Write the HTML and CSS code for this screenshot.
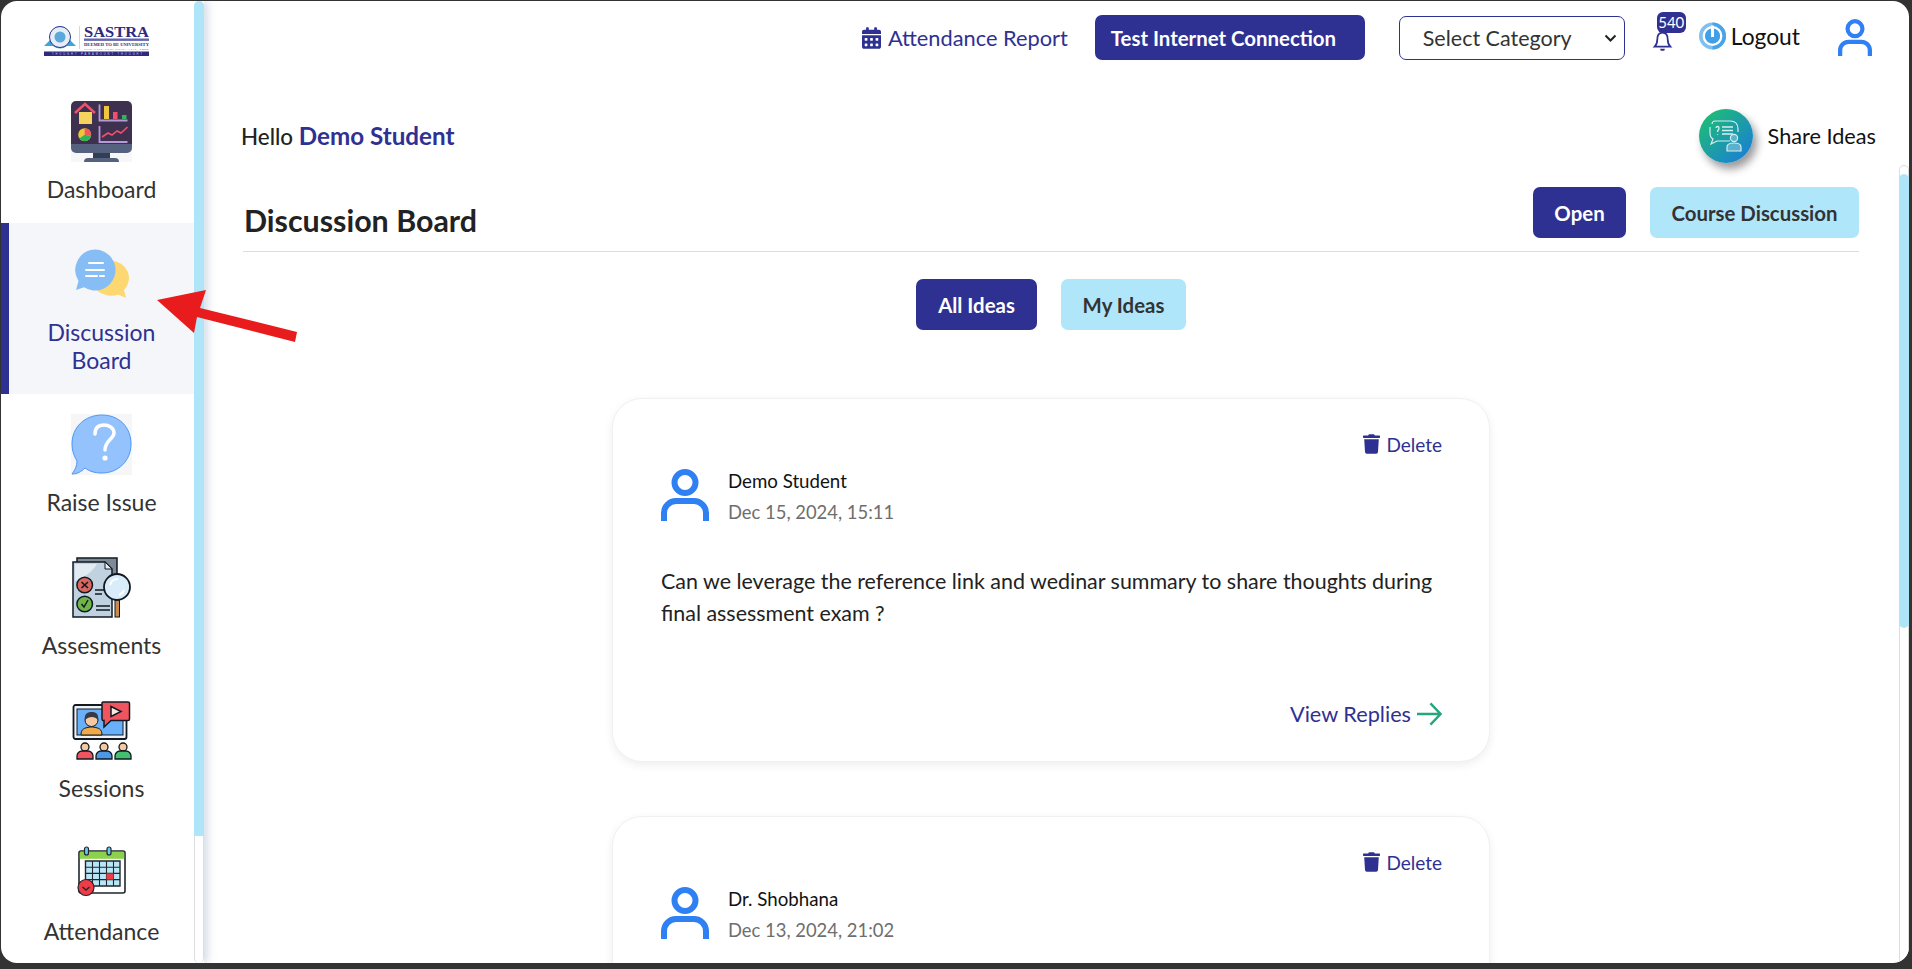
FILE: index.html
```html
<!DOCTYPE html>
<html lang="en">
<head>
<meta charset="utf-8">
<title>Discussion Board</title>
<link rel="stylesheet" href="styles.css">
</head>
<body>
<div class="window">
  <aside class="sidebar">
    <nav class="side-nav">
      <div class="logo">
        <svg class="logo-svg" viewBox="0 0 105 32" width="105" height="32">
          <path d="M0 21 L6 15 L10 4 Q16 -2 22 4 L26 15 L32 21 L23 21 Q16 26 9 21Z" fill="#3aa6dd"/>
          <circle cx="16" cy="12" r="10.500" fill="#e6eef5" stroke="#2e3192" stroke-width="1"/>
          <circle cx="16" cy="12" r="5.500" fill="#5aa8dc"/>
          <rect x="35" y="1" width="0.6" height="23" fill="#bbb"/>
          <text class="logo-name" x="40" y="12" textLength="65" lengthAdjust="spacingAndGlyphs">SASTRA</text>
          <rect x="40" y="13.5" width="65" height="2.4" fill="#2e3192" opacity=".75"/>
          <text class="logo-sub" x="40" y="20.5" textLength="65" lengthAdjust="spacingAndGlyphs">DEEMED TO BE UNIVERSITY</text>
          <text class="logo-sub2" x="40" y="24.5" textLength="65" lengthAdjust="spacingAndGlyphs">U/S 3 OF THE UGC ACT, 1956</text>
          <rect x="0" y="26.5" width="105" height="4.5" fill="#2e2a80"/>
          <text class="logo-tag" x="8" y="30" textLength="90" lengthAdjust="spacing">THOUGHT PARAMOUNT THOUGHT</text>
        </svg>
      </div>

      <a class="nav-item nav-first">
        <svg class="nav-icon" viewBox="0 0 61 61">
          <rect width="61" height="61" fill="#f7f7f7"/>
          <path d="M5 0H56a5 5 0 0 1 5 5V47H0V5a5 5 0 0 1 5-5Z" fill="#3e3150"/>
          <path d="M0 43H61V47a5 5 0 0 1-5 5H5a5 5 0 0 1-5-5Z" fill="#56607f"/>
          <rect x="22" y="52" width="17" height="5" fill="#2f3f55"/>
          <path d="M13 61a4 4 0 0 1 4-4H44a4 4 0 0 1 4 4Z" fill="#56607f"/>
          <path d="M8 11H21V23H8Z" fill="#f5d35c"/>
          <path d="M4 12L14 3L24 12" fill="none" stroke="#f0506a" stroke-width="2.6"/>
          <path d="M28.5 3.5V19.5H56.5" fill="none" stroke="#b29bd6" stroke-width="1.8"/>
          <rect x="33" y="5" width="5" height="13" fill="#f0c43c"/>
          <rect x="42" y="11" width="4.5" height="7" fill="#f0506a"/>
          <rect x="51" y="14" width="4.5" height="4" fill="#2fb559"/>
          <circle cx="13.7" cy="33.7" r="6.5" fill="#f0c43c"/>
          <path d="M13.7 33.7V27.2A6.5 6.5 0 0 1 20 35Z" fill="#ee5b5b"/>
          <path d="M13.7 33.7L20 35A6.5 6.5 0 0 1 8.5 37.5Z" fill="#2fb559"/>
          <path d="M28.5 25V41H56.5" fill="none" stroke="#b29bd6" stroke-width="1.8"/>
          <path d="M31 36L37 32L41 34L46 30L50 32L56.5 26" fill="none" stroke="#f0506a" stroke-width="1.6"/>
        </svg>
        <span class="nav-label">Dashboard</span>
      </a>

      <a class="nav-item nav-active">
        <svg class="nav-icon" viewBox="0 0 61 61">
          <path d="M41 18a17 17 0 1 0-7 33.5 a17 17 0 0 0 13 0L55 55L53 47A17 17 0 0 0 41 18Z" fill="#fdd772"/>
          <path d="M24 6.5a20.5 20.5 0 1 1-11 37.8L5 47L7.500 38A20.500 20.500 0 0 1 24 6.500Z" fill="#85bdf4"/>
          <path d="M18 20H32M15 27H33M15 33H26M29 33H33" stroke="#fff" stroke-width="2" stroke-linecap="round"/>
        </svg>
        <span class="nav-label">Discussion<br>Board</span>
      </a>

      <a class="nav-item">
        <svg class="nav-icon" viewBox="0 0 61 61">
          <rect width="61" height="61" fill="#f6f6f6"/>
          <path d="M31 1C48 1 60 13 60 30C60 47 47 59 31 59C23 59 18 57 14 54C10 58 6 60 1 60C4 56 6 52 6 47C3 42 1 37 1 30C1 13 14 1 31 1Z" fill="#94c2fd" stroke="#4d97fb" stroke-width="1"/>
          <path d="M24 20C24 13 28 11 33 11C38 11 43 14 43 19C43 25 34 26 34 36" fill="none" stroke="#fff" stroke-width="3.500" stroke-linecap="round"/>
          <circle cx="34" cy="44" r="2.600" fill="#fff"/>
        </svg>
        <span class="nav-label">Raise Issue</span>
      </a>

      <a class="nav-item">
        <svg class="nav-icon" viewBox="0 0 61 61">
          <path d="M6 4V1H46V40H6Z" fill="#7f8a96" stroke="#111a22" stroke-width="1.500"/>
          <path d="M2 5H34L41 12V60H2Z" fill="#c0d2e0" stroke="#111a22" stroke-width="1.500"/>
          <path d="M34 5V12H41Z" fill="#e6edf3" stroke="#111a22" stroke-width="1"/>
          <path d="M4 7H26C22 14 14 20 4 24Z" fill="#e2ebf2"/>
          <circle cx="13.700" cy="28" r="7.800" fill="#d9675d" stroke="#111a22" stroke-width="1.500"/>
          <path d="M10.500 25L17 31M17 25L10.500 31" stroke="#111a22" stroke-width="1.700"/>
          <circle cx="13.700" cy="47" r="7.800" fill="#6fb548" stroke="#111a22" stroke-width="1.500"/>
          <path d="M10.500 47L13 50L17 43" fill="none" stroke="#111a22" stroke-width="1.500"/>
          <path d="M24 33H33M24 37H31M25 49H39M25 53H39" stroke="#111a22" stroke-width="1.300"/>
          <rect x="44" y="43" width="4.500" height="17" fill="#c98a4b" stroke="#111a22" stroke-width="1"/>
          <circle cx="46" cy="30" r="13" fill="#d9ecfa" stroke="#111a22" stroke-width="1.800"/>
          <path d="M39 28A8 8 0 0 1 47 22M53 33A8 8 0 0 1 48 38" fill="none" stroke="#fff" stroke-width="2"/>
        </svg>
        <span class="nav-label">Assesments</span>
      </a>

      <a class="nav-item">
        <svg class="nav-icon" viewBox="0 0 61 61">
          <rect x="2.500" y="5" width="53" height="34" rx="2" fill="#eef2f6" stroke="#111a22" stroke-width="1.800"/>
          <rect x="6" y="9" width="46" height="26" fill="#69b0fb" stroke="#111a22" stroke-width="1"/>
          <path d="M10 35C10 29 13 28 19 27L22 27C28 28 31 29 31 35Z" fill="#f2a94a" stroke="#111a22" stroke-width="1"/>
          <circle cx="20.500" cy="20" r="6.500" fill="#f6c9a0" stroke="#111a22" stroke-width="1"/>
          <path d="M14 20C13 13 17 12 21 12C25 12 28 14 27 20C24 16 18 16 14 20Z" fill="#3a3a44"/>
          <path d="M33 2H57a1.500 1.500 0 0 1 1.500 1.500V19a1.500 1.500 0 0 1-1.500 1.500H40L33 27V20.500A1.500 1.500 0 0 1 31 19V3.500A1.500 1.500 0 0 1 33 2Z" fill="#f0555f" stroke="#111a22" stroke-width="1.500"/>
          <path d="M40 6.500L50 11.500L40 16.500Z" fill="#f8e9e0" stroke="#111a22" stroke-width="1.500"/>
          <g stroke="#111a22" stroke-width="1.300">
            <circle cx="14" cy="47" r="4" fill="#f6c9a0"/>
            <path d="M6 59V56A5 5 0 0 1 11 51H17A5 5 0 0 1 22 56V59Z" fill="#f0555f"/>
            <circle cx="33" cy="47" r="4" fill="#f6c9a0"/>
            <path d="M25 59V56A5 5 0 0 1 30 51H36A5 5 0 0 1 41 56V59Z" fill="#4d97e6"/>
            <circle cx="52" cy="47" r="4" fill="#f6c9a0"/>
            <path d="M44 59V56A5 5 0 0 1 49 51H55A5 5 0 0 1 60 56V59Z" fill="#42c06f"/>
          </g>
        </svg>
        <span class="nav-label">Sessions</span>
      </a>

      <a class="nav-item">
        <svg class="nav-icon" viewBox="0 0 61 61">
          <rect x="8" y="8" width="46" height="42" rx="2" fill="#fff" stroke="#20262c" stroke-width="1.600"/>
          <rect x="8.800" y="8.800" width="44.400" height="7" fill="#8bd14b"/>
          <rect x="13.500" y="4" width="4" height="8" rx="2" fill="#6bc6ea" stroke="#20262c" stroke-width="1.200"/>
          <rect x="36" y="4" width="4" height="8" rx="2" fill="#6bc6ea" stroke="#20262c" stroke-width="1.200"/>
          <path d="M14.500 18H49V43H14.500Z" fill="#b9e6f7" stroke="#20262c" stroke-width="1.400"/>
          <path d="M21.500 18V43M28.500 18V43M35.500 18V43M42.500 18V43M14.500 24.200H49M14.500 30.400H49M14.500 36.600H49" stroke="#20262c" stroke-width="1.100"/>
          <rect x="35.500" y="30.400" width="7" height="6.200" fill="#ef3c46"/>
          <circle cx="15" cy="44.500" r="8" fill="#ef3c46" stroke="#20262c" stroke-width="1.200"/>
          <path d="M11.500 44L15 47L18.500 44" fill="none" stroke="#20262c" stroke-width="1.400"/>
        </svg>
        <span class="nav-label">Attendance</span>
      </a>
    </nav>
    <div class="side-track"><div class="side-thumb"></div></div>
  </aside>

  <main class="main">
    <header class="topbar">
      <a class="report-link">
        <svg class="cal-icon" viewBox="0 0 448 512"><path fill="currentColor" d="M0 464c0 26.500 21.500 48 48 48h352c26.500 0 48-21.500 48-48V192H0v272zm320-196c0-6.600 5.400-12 12-12h40c6.600 0 12 5.400 12 12v40c0 6.600-5.400 12-12 12h-40c-6.600 0-12-5.400-12-12v-40zm0 128c0-6.600 5.400-12 12-12h40c6.600 0 12 5.400 12 12v40c0 6.600-5.400 12-12 12h-40c-6.600 0-12-5.400-12-12v-40zM192 268c0-6.600 5.400-12 12-12h40c6.600 0 12 5.400 12 12v40c0 6.600-5.400 12-12 12h-40c-6.600 0-12-5.400-12-12v-40zm0 128c0-6.600 5.400-12 12-12h40c6.600 0 12 5.400 12 12v40c0 6.600-5.400 12-12 12h-40c-6.600 0-12-5.400-12-12v-40zM64 268c0-6.600 5.400-12 12-12h40c6.600 0 12 5.400 12 12v40c0 6.600-5.400 12-12 12H76c-6.600 0-12-5.400-12-12v-40zm0 128c0-6.600 5.400-12 12-12h40c6.600 0 12 5.400 12 12v40c0 6.600-5.400 12-12 12H76c-6.600 0-12-5.400-12-12v-40zM400 64h-48V16c0-8.800-7.200-16-16-16h-32c-8.800 0-16 7.200-16 16v48H160V16c0-8.800-7.200-16-16-16h-32c-8.800 0-16 7.200-16 16v48H48C21.500 64 0 85.500 0 112v48h448v-48c0-26.500-21.500-48-48-48z"/></svg>
        Attendance Report
      </a>
      <button class="btn btn-primary btn-test">Test Internet Connection</button>
      <select class="category"><option>Select Category</option></select>
      <div class="bell">
        <svg class="bell-icon" viewBox="0 0 22 24"><path d="M11 3C6.500 3 5 7 5 11C5 15 4 17 2 19H20C18 17 17 15 17 11C17 7 15.500 3 11 3Z" fill="#fff" stroke="#2e3192" stroke-width="2"/><path d="M8.500 21.500H13.500V23C12 24 10 24 8.500 23Z" fill="#2e3192"/></svg>
        <span class="badge">540</span>
      </div>
      <a class="logout">
        <svg class="power-icon" viewBox="0 0 28 28">
          <circle cx="14" cy="14" r="14" fill="#7fc0f0"/>
          <path d="M14 0A14 14 0 0 1 14 28Z" fill="#4aa3e8"/>
          <circle cx="14" cy="14" r="9" fill="none" stroke="#fff" stroke-width="2.600"/>
          <circle cx="14" cy="14" r="7.800" fill="#3f9fe8"/>
          <path d="M14 3V15" stroke="#fff" stroke-width="3.200"/>
        </svg>
        Logout
      </a>
      <svg class="user-top avatar-icon" viewBox="0 0 48 52"><circle cx="24" cy="13.500" r="10.500" fill="none" stroke="#2f80f2" stroke-width="6"/><path d="M3 52V44A12 12 0 0 1 15 32H33A12 12 0 0 1 45 44V52" fill="none" stroke="#2f80f2" stroke-width="6"/></svg>
    </header>

    <div class="greeting-row">
      <p class="greeting">Hello <span class="greeting-name">Demo Student</span></p>
      <a class="share">
        <span class="share-circle">
          <svg class="share-icon" viewBox="0 0 36 36" fill="none" stroke="#d6eef0" stroke-width="1.200">
            <path d="M4 6a3 3 0 0 1 3-3H22C27 3 30 6 30 11V14M22 23H9L3 26L5 21C3 20 2 18 2 15V9"/>
            <path d="M14 9H25M14 12.500H25M14 16H25" stroke-width="1.600"/>
            <path d="M8 10C8 8 11 8 11 10C11 12 9.500 12 9.500 14M9.500 16V16.800" stroke-width="1.300"/>
            <circle cx="26" cy="20" r="3.600" fill="#d6eef0" fill-opacity=".35"/>
            <path d="M19 33V29C19 26 22 25 26 25C30 25 33 26 33 29V33Z" fill="#d6eef0" fill-opacity=".35"/>
          </svg>
        </span>
        Share Ideas
      </a>
    </div>

    <div class="scroller">
      <div class="content">
        <div class="board-head">
          <h1 class="board-title">Discussion Board</h1>
          <div class="head-actions">
            <button class="btn btn-primary btn-open">Open</button>
            <button class="btn btn-light btn-course">Course Discussion</button>
          </div>
        </div>
        <div class="tabs">
          <button class="btn btn-primary btn-all">All Ideas</button>
          <button class="btn btn-light btn-my">My Ideas</button>
        </div>

        <article class="card">
          <a class="delete">
            <svg class="trash" viewBox="0 0 448 512"><path fill="currentColor" d="M432 32H312l-9.400-18.700A24 24 0 0 0 281.100 0H166.800a23.720 23.720 0 0 0-21.400 13.300L136 32H16A16 16 0 0 0 0 48v32a16 16 0 0 0 16 16h416a16 16 0 0 0 16-16V48a16 16 0 0 0-16-16zM53.200 467a48 48 0 0 0 47.900 45h245.800a48 48 0 0 0 47.900-45L416 128H32z"/></svg>
            Delete
          </a>
          <div class="author">
            <svg class="avatar avatar-icon" viewBox="0 0 48 52"><circle cx="24" cy="13.500" r="10.500" fill="none" stroke="#2f80f2" stroke-width="6"/><path d="M3 52V44A12 12 0 0 1 15 32H33A12 12 0 0 1 45 44V52" fill="none" stroke="#2f80f2" stroke-width="6"/></svg>
            <div class="author-meta">
              <div class="author-name">Demo Student</div>
              <div class="author-date">Dec 15, 2024, 15:11</div>
            </div>
          </div>
          <p class="card-text">Can we leverage the reference link and wedinar summary to share thoughts during final assessment exam ?</p>
          <a class="replies">View Replies
            <svg class="arrow-right" viewBox="0 0 26 24" fill="none" stroke="#27a57e" stroke-width="2.600"><path d="M0 12H24M14 1L24.500 12L14 23"/></svg>
          </a>
        </article>

        <article class="card">
          <a class="delete">
            <svg class="trash" viewBox="0 0 448 512"><path fill="currentColor" d="M432 32H312l-9.400-18.700A24 24 0 0 0 281.100 0H166.800a23.720 23.720 0 0 0-21.400 13.300L136 32H16A16 16 0 0 0 0 48v32a16 16 0 0 0 16 16h416a16 16 0 0 0 16-16V48a16 16 0 0 0-16-16zM53.200 467a48 48 0 0 0 47.900 45h245.800a48 48 0 0 0 47.900-45L416 128H32z"/></svg>
            Delete
          </a>
          <div class="author">
            <svg class="avatar avatar-icon" viewBox="0 0 48 52"><circle cx="24" cy="13.500" r="10.500" fill="none" stroke="#2f80f2" stroke-width="6"/><path d="M3 52V44A12 12 0 0 1 15 32H33A12 12 0 0 1 45 44V52" fill="none" stroke="#2f80f2" stroke-width="6"/></svg>
            <div class="author-meta">
              <div class="author-name">Dr. Shobhana</div>
              <div class="author-date">Dec 13, 2024, 21:02</div>
            </div>
          </div>
        </article>
      </div>
      <div class="main-track"><div class="main-thumb"></div></div>
    </div>
  </main>
</div>
<svg class="pointer-arrow" viewBox="0 0 310 350" width="310" height="350"><polygon points="157,300 206,290 200,308 297,332 295,342 197,317 194,333" fill="#e81c1c"/></svg>
</body>
</html>
```

FILE: styles.css
```css
* { box-sizing: border-box; }
html, body { height: 100%; }
body {
  margin: 0;
  background: #333;
  font-family: Lato, "Open Sans", sans-serif;
  color: #333;
  overflow: hidden;
  position: relative;
}
a { color: inherit; text-decoration: none; }
.window {
  display: flex;
  height: 962px;
  margin: 1px 3px 0 1px;
  background: #fff;
  border-radius: 16px;
  overflow: hidden;
}
.pointer-arrow { position: absolute; top: 0; left: 0; z-index: 5; pointer-events: none; }

/* sidebar */
.sidebar { display: flex; flex: none; width: 203px; position: relative; z-index: 2; box-shadow: 4px 0 8px rgba(140, 160, 190, .35); }
.side-nav { width: 193px; flex: none; overflow: hidden; }
.logo { height: 80px; padding: 24px 0 0 43px; }
.logo-svg { display: block; }
.logo-name { font: bold 15px "Liberation Serif", serif; fill: #2e2a80; }
.logo-sub { font: bold 3.400px "Liberation Serif", serif; fill: #2e2a80; }
.logo-sub2 { font: 2.600px "Liberation Serif", serif; fill: #667; }
.logo-tag { font: 2.600px "Liberation Sans", sans-serif; fill: #c9c9e6; }
.nav-item { display: flex; flex-direction: column; align-items: center; padding: 20px 0 21px; border-left: 8px solid transparent; }
.nav-first { padding-bottom: 20px; }
.nav-active { background: #f5f6fa; border-left-color: #2e3192; color: #2e3192; padding-bottom: 20px; }
.nav-icon { display: block; width: 61px; height: 61px; flex: none; }
.nav-label { margin-top: 13px; font-size: 23px; line-height: 28px; text-align: center; }
.nav-active .nav-label { margin-top: 14px; }
.side-track { width: 10px; flex: none; background: #fff; border-left: 1px solid #ddd; border-right: 1px solid #ddd; border-radius: 5px; }
.side-thumb { height: 835px; margin: 0 -1px; background: #aee5f8; border-radius: 5px 5px 0 0; }

/* main */
.main { flex: 1; min-width: 0; display: flex; flex-direction: column; }
.topbar { height: 73px; flex: none; display: flex; align-items: center; justify-content: flex-end; padding-right: 37px; }
.report-link { display: flex; align-items: center; gap: 7px; font-size: 21.800px; color: #2e3192; margin-right: 27px; }
.cal-icon { width: 19px; height: 22px; display: block; }
.btn { border: 0; border-radius: 7px; font-family: inherit; font-weight: 700; font-size: 20.400px; cursor: pointer; padding: 0; }
.btn-primary { background: #2e3192; color: #fff; }
.btn-light { background: #b0e6fa; color: #333; }
.btn-test { width: 270px; height: 45px; margin-right: 34px; padding-left: 16px; text-align: left; }
.category { width: 226px; height: 44px; margin-right: 27px; padding: 0 0 0 23px; border: 1px solid #2e3192; border-radius: 7px; color: #333; font: 21.500px Lato, sans-serif; appearance: none; background: #fff url("data:image/svg+xml,%3Csvg xmlns='http://www.w3.org/2000/svg' width='13' height='8' viewBox='0 0 13 8'%3E%3Cpath d='M1.500 1.500L6.500 6.500L11.500 1.500' fill='none' stroke='%23222' stroke-width='2'/%3E%3C/svg%3E") no-repeat right 7px center; }
.bell { position: relative; width: 47px; height: 40px; align-self: flex-start; margin-top: 11px; }
.bell-icon { position: absolute; left: 0; top: 18px; width: 21px; height: 21px; }
.badge { position: absolute; left: 5px; top: 0; width: 29px; height: 21px; border-radius: 6px; background: #2e3192; color: #fff; font-size: 15px; line-height: 21px; text-align: center; }
.logout { display: flex; align-items: center; gap: 5px; font-size: 22.800px; color: #111; margin: 0 38px 4px 0; }
.power-icon { width: 27px; height: 28px; display: block; }
.avatar-icon { filter: blur(.5px); }
.user-top { width: 34px; height: 37px; display: block; }

.greeting-row { height: 59px; margin-top: 32px; flex: none; display: flex; align-items: center; justify-content: space-between; padding: 0 33px 0 37px; }
.greeting { margin: 0; font-size: 22.400px; color: #222; font-weight: 500; }
.greeting-name { color: #2e3192; font-size: 24.200px; font-weight: 700; }
.share { display: flex; align-items: center; gap: 15px; font-size: 21.700px; color: #111; }
.share-circle { width: 54px; height: 54px; border-radius: 50%; background: linear-gradient(135deg, #1fc46a, #1a78e0); box-shadow: 4px 6px 8px rgba(0, 0, 0, .4); display: flex; align-items: center; justify-content: center; }
.share-icon { width: 36px; height: 36px; display: block; }

.scroller { flex: 1; min-height: 0; display: flex; overflow: hidden; }
.content { flex: 1; min-width: 0; padding: 22px 40px 0 39px; overflow: hidden; }
.main-track { width: 10px; flex: none; background: #fff; border: 1px solid #ddd; border-bottom: 0; border-radius: 5px 5px 0 0; padding-top: 8px; }
.main-thumb { height: 454px; margin: 0 -1px; background: #aee5f8; border-radius: 5px; }

.board-head { display: flex; align-items: flex-start; justify-content: space-between; padding-bottom: 13px; border-bottom: 1px solid #ddd; }
.board-title { margin: 15px 0 0 1px; font-size: 30.400px; line-height: 36px; font-weight: 700; color: #222; }
.head-actions { display: flex; gap: 24px; }
.btn-open { width: 93px; height: 51px; }
.btn-course { width: 209px; height: 51px; }
.tabs { display: flex; justify-content: center; gap: 24px; margin: 27px 0 68px; }
.btn-all { width: 121px; height: 51px; }
.btn-my { width: 125px; height: 51px; }

.card { width: 878px; height: 364px; margin: 0 auto 54px; padding: 33px 47px 34px 48px; border: 1px solid #f1f1f1; border-radius: 30px; background: #fff; box-shadow: 0 3px 10px rgba(0, 0, 0, .07); display: flex; flex-direction: column; }
.delete { align-self: flex-end; display: flex; align-items: center; gap: 6px; height: 24px; font-size: 19px; color: #2e3192; }
.trash { width: 17px; height: 20px; display: block; }
.author { display: flex; gap: 19px; margin-top: 13px; }
.avatar { width: 48px; height: 52px; flex: none; }
.author-name { font-size: 18.700px; line-height: 24px; color: #111; }
.author-date { font-size: 18.400px; line-height: 26px; color: #6e6e6e; margin-top: 6px; }
.card-text { margin: 40px 0 0; font-size: 21.440px; line-height: 32px; color: #222; }
.replies { margin-top: auto; align-self: flex-end; display: flex; align-items: center; gap: 6px; font-size: 21.700px; color: #2e3192; }
.arrow-right { width: 25px; height: 24px; display: block; }
```
